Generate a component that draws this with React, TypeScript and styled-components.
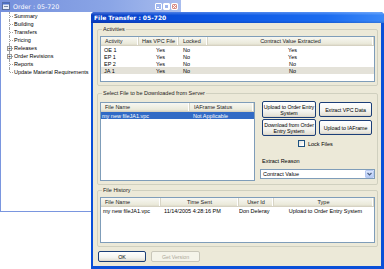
import React from 'react';
import styled, { createGlobalStyle } from 'styled-components';

const Global = createGlobalStyle`
  html, body { margin: 0; padding: 0; background: #ffffff; }
  body { font-family: "Liberation Sans", Arial, sans-serif; font-size: 5.5px; color: #000; }
  * { box-sizing: border-box; }
`;

const Desktop = styled.div`
  position: relative;
  width: 384px;
  height: 269px;
  overflow: hidden;
  background: #ffffff;
`;

/* ---------- back window ---------- */
const BackWindow = styled.div`
  position: absolute;
  left: 0;
  top: 0;
  width: 181px;
  height: 212px;
  display: flex;
  flex-direction: column;
`;

const BackTitle = styled.div`
  height: 12px;
  flex: none;
  display: flex;
  align-items: center;
  gap: 3px;
  padding: 0 3px 0 2px;
  background: linear-gradient(to right, #7590dc 0%, #8aa5e6 60%, #a9bdee 100%);
  color: #ffffff;
  font-family: "DejaVu Sans", "Liberation Sans", sans-serif;
  font-size: 6.3px;
`;

const TitleText = styled.span`
  flex: 1;
  white-space: nowrap;
`;

const CaptionButton = styled.span<{ $close?: boolean }>`
  width: 7px;
  height: 7px;
  border-radius: 1px;
  border: 1px solid #ffffff;
  background: ${(p) => (p.$close ? '#d98e86' : '#9fb6ee')};
  display: flex;
  align-items: center;
  justify-content: center;
`;

const CaptionGroup = styled.div`
  display: flex;
  gap: 1px;
`;

const BackBody = styled.div`
  flex: 1;
  background: #ffffff;
  border: 1px solid #7a96df;
  border-top: none;
  padding-top: 0;
`;

const TreeRow = styled.div<{ $last?: boolean }>`
  position: relative;
  height: 8px;
  display: flex;
  align-items: center;
  padding-left: 13px;
  white-space: nowrap;
  &::before {
    content: '';
    position: absolute;
    left: 8px;
    top: 0;
    height: ${(p) => (p.$last ? '4px' : '8px')};
    border-left: 1px dotted #a0a0a0;
  }
  &::after {
    content: '';
    position: absolute;
    left: 9px;
    top: 4px;
    width: 3px;
    border-top: 1px dotted #a0a0a0;
  }
`;

const Expander = styled.span`
  position: absolute;
  left: 6px;
  top: 2px;
  width: 5px;
  height: 5px;
  border: 1px solid #9a9a9a;
  background: #ffffff;
  z-index: 1;
  display: flex;
  align-items: center;
  justify-content: center;
  font-size: 5px;
  line-height: 3px;
  color: #000;
`;

/* ---------- front window ---------- */
const FrontWindow = styled.div`
  position: absolute;
  left: 91px;
  top: 12px;
  width: 293px;
  height: 257px;
  display: flex;
  flex-direction: column;
  background: #0a4fd8;
  border-radius: 4px 4px 0 0;
  padding: 0 3px 3px 2px;
`;

const FrontTitle = styled.div`
  height: 11px;
  flex: none;
  display: flex;
  align-items: center;
  margin: 0 -3px 0 -2px;
  padding-left: 3px;
  border-radius: 4px 4px 0 0;
  background:
    linear-gradient(to bottom, rgba(255,255,255,0.28) 0%, rgba(255,255,255,0) 30%, rgba(0,0,0,0) 80%, rgba(0,0,40,0.15) 100%),
    linear-gradient(to right, #0a3fc4 0%, #0b55e2 40%, #1b6cf0 80%, #3a88f8 100%);
  color: #ffffff;
  font-family: "DejaVu Sans", "Liberation Sans", sans-serif;
  font-weight: bold;
  font-size: 6px;
  white-space: nowrap;
`;

const FrontBody = styled.div`
  flex: 1;
  background: #ece9d8;
  display: flex;
  flex-direction: column;
  padding: 3px 3px 0 4px;
`;

const Group = styled.fieldset<{ $mt?: number }>`
  margin: ${(p) => p.$mt ?? 0}px 0 0 0;
  padding: 0 2px 3px 2px;
  border: 1px solid #d0d0bf;
  border-radius: 2px;
  min-width: 0;
`;

const GroupLabel = styled.legend`
  padding: 0 1px;
  margin-left: 2px;
  font-size: 5.5px;
  line-height: 6px;
  color: #1a1a1a;
`;

const ListView = styled.div<{ $h: number; $mt: number; $w?: number }>`
  margin-top: ${(p) => p.$mt}px;
  height: ${(p) => p.$h}px;
  width: ${(p) => (p.$w ? `${p.$w}px` : 'auto')};
  flex: none;
  background: #ffffff;
  border: 1px solid #7f9db9;
  overflow: hidden;
`;

const HeaderRow = styled.div<{ $cols: string }>`
  display: grid;
  grid-template-columns: ${(p) => p.$cols};
  height: 9px;
  background: linear-gradient(to bottom, #f7f7f2 0%, #ebeadb 80%, #dedbcb 100%);
  border-bottom: 1px solid #d6d2c2;
`;

const HeaderCell = styled.div<{ $align?: string }>`
  display: flex;
  align-items: center;
  justify-content: ${(p) => (p.$align === 'center' ? 'center' : 'flex-start')};
  padding: 0 4px;
  white-space: nowrap;
  color: #222;
  border-right: 1px solid #d8d5c6;
  box-shadow: inset -1px 0 0 #ffffff;
  overflow: hidden;
`;

const DataRow = styled.div<{ $cols: string; $sel?: 'blue' | 'gray' }>`
  display: grid;
  grid-template-columns: ${(p) => p.$cols};
  height: 7px;
  background: ${(p) => (p.$sel === 'blue' ? '#316ac5' : p.$sel === 'gray' ? '#e4e2d9' : 'transparent')};
  color: ${(p) => (p.$sel === 'blue' ? '#ffffff' : '#000')};
`;

const DataCell = styled.div<{ $align?: string; $pl?: number }>`
  display: flex;
  align-items: center;
  justify-content: ${(p) => (p.$align === 'center' ? 'center' : 'flex-start')};
  padding-left: ${(p) => p.$pl ?? 3}px;
  white-space: nowrap;
  overflow: hidden;
`;

const SelectContent = styled.div`
  display: flex;
  gap: 5px;
  margin-top: 6px;
`;

const SideColumn = styled.div`
  flex: 1;
  display: flex;
  flex-direction: column;
  margin-top: -1px;
`;

const ButtonGrid = styled.div`
  display: grid;
  grid-template-columns: 54px 53px;
  grid-auto-rows: 17px;
  column-gap: 3px;
  row-gap: 1px;
  padding-left: 2px;
  align-items: center;
`;

const XPButton = styled.button<{ $w?: number; $h?: number; $disabled?: boolean }>`
  width: ${(p) => (p.$w ? `${p.$w}px` : '100%')};
  height: ${(p) => p.$h ?? 15}px;
  padding: 0;
  margin: 0;
  border: 1px solid ${(p) => (p.$disabled ? '#c9c7ba' : '#1c3f78')};
  border-radius: 2px;
  background: ${(p) =>
    p.$disabled
      ? '#f5f4ea'
      : 'linear-gradient(to bottom, #ffffff 0%, #f4f4f0 60%, #e6e3d8 90%, #d6d0c5 100%)'};
  color: ${(p) => (p.$disabled ? '#aca899' : '#000')};
  font-family: "Liberation Sans", Arial, sans-serif;
  font-size: 5.3px;
  letter-spacing: -0.05px;
  line-height: 6px;
  text-align: center;
  white-space: nowrap;
  display: flex;
  align-items: center;
  justify-content: center;
`;

const CheckRow = styled.div`
  display: flex;
  align-items: center;
  justify-content: flex-start;
  gap: 3px;
  margin-top: 4px;
  padding-left: 38px;
  height: 7px;
`;

const CheckBox = styled.span`
  flex: none;
  width: 7px;
  height: 7px;
  border: 1px solid #1c5180;
  background: linear-gradient(135deg, #dcdcd7 0%, #ffffff 80%);
`;

const FieldLabel = styled.div`
  margin-top: 11px;
  padding-left: 2px;
  height: 6px;
  line-height: 6px;
`;

const Combo = styled.div`
  margin-top: 5px;
  height: 10px;
  border: 1px solid #7f9db9;
  background: #ffffff;
  display: flex;
  align-items: center;
  padding-left: 2px;
  justify-content: space-between;
`;

const ComboArrow = styled.span`
  width: 9px;
  height: 8px;
  border-radius: 1px;
  background: linear-gradient(to bottom, #dbe6fd 0%, #b5cbf6 100%);
  border: 1px solid #b7c9f1;
  display: flex;
  align-items: center;
  justify-content: center;
`;

const ButtonBar = styled.div`
  display: flex;
  gap: 5px;
  margin-top: 4px;
  padding-left: 1px;
`;

const actCols = '38px 40px 29px 1fr';
const selCols = '89px 1fr';
const histCols = '60px 78px 35px 1fr';

export default function App() {
  const tree: { label: string; exp?: boolean }[] = [
    { label: 'Summary' },
    { label: 'Building' },
    { label: 'Transfers' },
    { label: 'Pricing' },
    { label: 'Releases', exp: true },
    { label: 'Order Revisions', exp: true },
    { label: 'Reports' },
    { label: 'Update Material Requirements' },
  ];
  const acts = [
    ['OE 1', 'Yes', 'No', 'Yes'],
    ['EP 1', 'Yes', 'No', 'Yes'],
    ['EP 2', 'Yes', 'No', 'No'],
    ['JA 1', 'Yes', 'No', 'No'],
  ];
  return (
    <Desktop>
      <Global />
      <BackWindow>
        <BackTitle>
          <svg width="8" height="8" viewBox="0 0 8 8">
            <rect x="0.5" y="0.5" width="7" height="7" fill="#e8eef8" stroke="#5a6e9a" />
            <rect x="0.5" y="0.5" width="7" height="2" fill="#4a6fc8" />
            <rect x="2" y="4" width="4" height="1" fill="#7a8aa8" />
          </svg>
          <TitleText>Order : 05-720</TitleText>
          <CaptionGroup>
            <CaptionButton>
              <svg width="5" height="5" viewBox="0 0 5 5"><rect x="1" y="3" width="2" height="1" fill="#fff" /></svg>
            </CaptionButton>
            <CaptionButton>
              <svg width="5" height="5" viewBox="0 0 5 5"><rect x="0.5" y="0.5" width="4" height="4" fill="none" stroke="#fff" /></svg>
            </CaptionButton>
            <CaptionButton $close>
              <svg width="5" height="5" viewBox="0 0 5 5"><path d="M0.5 0.5 L4.5 4.5 M4.5 0.5 L0.5 4.5" stroke="#fff" strokeWidth="1" /></svg>
            </CaptionButton>
          </CaptionGroup>
        </BackTitle>
        <BackBody>
          {tree.map((t, i) => (
            <TreeRow key={t.label} $last={i === tree.length - 1}>
              {t.exp && <Expander>+</Expander>}
              {t.label}
            </TreeRow>
          ))}
        </BackBody>
      </BackWindow>

      <FrontWindow>
        <FrontTitle>File Transfer : 05-720</FrontTitle>
        <FrontBody>
          <Group>
            <GroupLabel>Activities</GroupLabel>
            <ListView $h={46} $mt={4}>
              <HeaderRow $cols={actCols}>
                <HeaderCell>Activity</HeaderCell>
                <HeaderCell $align="center">Has VPC File</HeaderCell>
                <HeaderCell>Locked</HeaderCell>
                <HeaderCell $align="center">Contract Value Extracted</HeaderCell>
              </HeaderRow>
              {acts.map((r, i) => (
                <DataRow key={r[0]} $cols={actCols} $sel={i === 3 ? 'gray' : undefined}>
                  <DataCell>{r[0]}</DataCell>
                  <DataCell $align="center">{r[1]}</DataCell>
                  <DataCell $pl={4}>{r[2]}</DataCell>
                  <DataCell $align="center">{r[3]}</DataCell>
                </DataRow>
              ))}
            </ListView>
          </Group>

          <Group $mt={4}>
            <GroupLabel>Select File to be Downloaded from Server</GroupLabel>
            <SelectContent>
              <ListView $h={79} $mt={0} $w={155}>
                <HeaderRow $cols={selCols}>
                  <HeaderCell>File Name</HeaderCell>
                  <HeaderCell>IAFrame Status</HeaderCell>
                </HeaderRow>
                <DataRow $cols={selCols} $sel="blue">
                  <DataCell $pl={1}>my new fileJA1.vpc</DataCell>
                  <DataCell>Not Applicable</DataCell>
                </DataRow>
              </ListView>
              <SideColumn>
                <ButtonGrid>
                  <XPButton $h={17}>Upload to Order Entry<br />System</XPButton>
                  <XPButton>Extract VPC Data</XPButton>
                  <XPButton $h={17}>Download from Order<br />Entry System</XPButton>
                  <XPButton>Upload to IAFrame</XPButton>
                </ButtonGrid>
                <CheckRow>
                  <CheckBox />
                  <span>Lock Files</span>
                </CheckRow>
                <FieldLabel>Extract Reason</FieldLabel>
                <Combo>
                  Contract Value
                  <ComboArrow>
                    <svg width="5" height="4" viewBox="0 0 5 4">
                      <path d="M0.5 1 L2.5 3 L4.5 1" fill="none" stroke="#4d6185" strokeWidth="1.2" />
                    </svg>
                  </ComboArrow>
                </Combo>
              </SideColumn>
            </SelectContent>
          </Group>

          <Group $mt={2}>
            <GroupLabel>File History</GroupLabel>
            <ListView $h={46} $mt={4}>
              <HeaderRow $cols={histCols}>
                <HeaderCell>File Name</HeaderCell>
                <HeaderCell $align="center">Time Sent</HeaderCell>
                <HeaderCell $align="center">User Id</HeaderCell>
                <HeaderCell $align="center">Type</HeaderCell>
              </HeaderRow>
              <DataRow $cols={histCols}>
                <DataCell $pl={2}>my new fileJA1.vpc</DataCell>
                <DataCell $pl={3}>11/14/2005 4:28:16 PM</DataCell>
                <DataCell $pl={0}>Don Deleray</DataCell>
                <DataCell $align="center">Upload to Order Entry System</DataCell>
              </DataRow>
            </ListView>
          </Group>

          <ButtonBar>
            <XPButton $w={48} $h={11}>OK</XPButton>
            <XPButton $w={49} $h={11} $disabled>Get Version</XPButton>
          </ButtonBar>
        </FrontBody>
      </FrontWindow>
    </Desktop>
  );
}
